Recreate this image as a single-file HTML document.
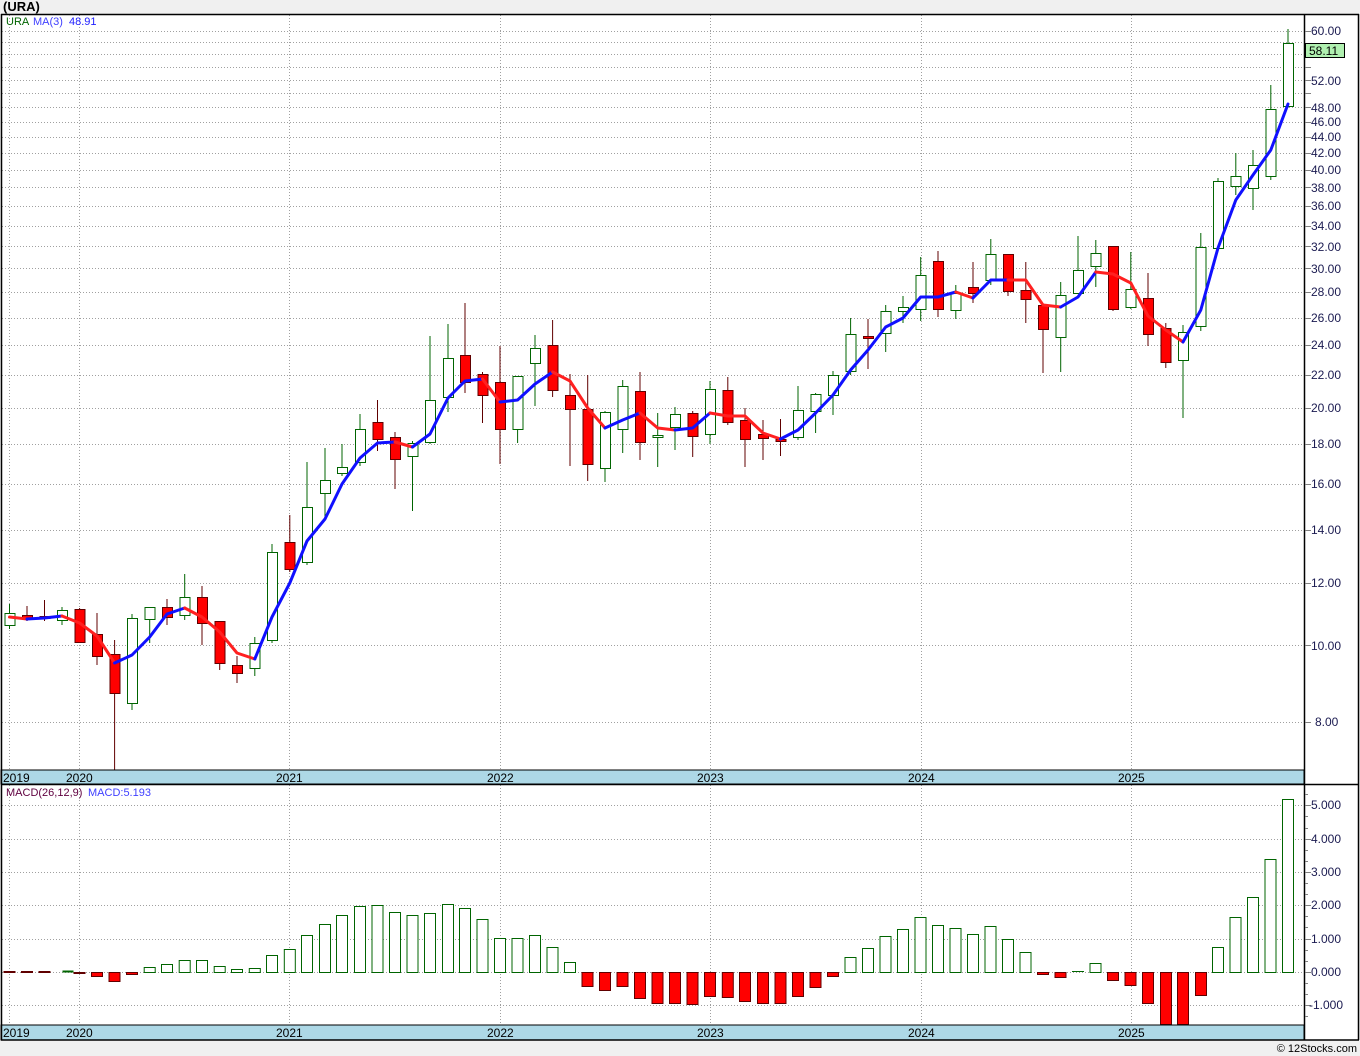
<!DOCTYPE html>
<html><head><meta charset="utf-8"><style>
html,body{margin:0;padding:0;background:#f0f0f0;}
svg{display:block;font-family:"Liberation Sans",sans-serif;}
</style></head><body>
<svg width="1360" height="1056" viewBox="0 0 1360 1056" xmlns="http://www.w3.org/2000/svg">
<rect width="1360" height="1056" fill="#f0f0f0"/>
<text x="3" y="11" font-size="13" font-weight="bold" fill="#000">(URA)</text>
<rect x="1" y="14" width="1358" height="1026" fill="#fff"/>
<g stroke="#a0a0a0" stroke-dasharray="1,2" stroke-width="1" fill="none">
<path d="M2 31.5H1304M2 42.5H1304M2 54.5H1304M2 67.5H1304M2 80.5H1304M2 93.5H1304M2 107.5H1304M2 122.5H1304M2 137.5H1304M2 153.5H1304M2 170.5H1304M2 187.5H1304M2 206.5H1304M2 226.5H1304M2 246.5H1304M2 268.5H1304M2 292.5H1304M2 318.5H1304M2 345.5H1304M2 375.5H1304M2 408.5H1304M2 444.5H1304M2 484.5H1304M2 530.5H1304M2 583.5H1304M2 645.5H1304M2 722.5H1304"/>
<path d="M9.5 15V770M79.5 15V770M289.5 15V770M500.5 15V770M710.5 15V770M921.5 15V770M1131.5 15V770"/>
<path d="M2 805.5H1304M2 839.5H1304M2 872.5H1304M2 905.5H1304M2 939.5H1304M2 972.5H1304M2 1005.5H1304"/>
<path d="M9.5 785V1025M79.5 785V1025M289.5 785V1025M500.5 785V1025M710.5 785V1025M921.5 785V1025M1131.5 785V1025"/>
</g>
<text x="6" y="25" font-size="11" fill="#006400">URA</text>
<text x="33" y="25" font-size="11" fill="#4040ff">MA(3)</text>
<text x="69" y="25" font-size="11" fill="#2020ff">48.91</text>
<g stroke-width="1">
<g stroke="#006400" fill="#fff">
<path d="M9.5 604V629M62 607V625M132 614V710M149.7 607V643M184.7 574V620M254.8 637V676M272 544V643M307 462V565M325 448V517M342 444V476M360 414V466M412.5 441V511M430 336V444M448 324V412M517.6 376V443M535 335V406M605 411V482M622.7 380V453M657.7 413V467M675 407V450M710 381V444M798 386V440M815.6 393V433M833 371V415M850.6 318V375M885.7 305V352M903 296V323M920.7 257V321M955.8 285V319M990.8 239V285M1060.7 282V372M1078 236V293M1095.8 240V287M1130.8 252V309M1183 325V418M1200.8 233V331M1218 178V250M1235.8 153V195M1253 150V210M1270.8 85V180M1288 29V108"/>
<rect x="5" y="613.5" width="10" height="12"/><rect x="57.5" y="610.5" width="10" height="10"/><rect x="127.5" y="618.5" width="10" height="85"/><rect x="145" y="607.5" width="10" height="12"/><rect x="180" y="597.5" width="10" height="18"/><rect x="250" y="643.5" width="10" height="25"/><rect x="267.5" y="552.5" width="10" height="88"/><rect x="302.5" y="507.5" width="10" height="55"/><rect x="320.5" y="480.5" width="10" height="13"/><rect x="337.5" y="467.5" width="10" height="6"/><rect x="355.5" y="429.5" width="10" height="33"/><rect x="408" y="443.5" width="10" height="13"/><rect x="425.5" y="400.5" width="10" height="42"/><rect x="443.5" y="358.5" width="10" height="39"/><rect x="513" y="376.5" width="10" height="53"/><rect x="530.5" y="348.5" width="10" height="15"/><rect x="600.5" y="412.5" width="10" height="56"/><rect x="618" y="386.5" width="10" height="43"/><rect x="653" y="435.5" width="10" height="2"/><rect x="670.5" y="414.5" width="10" height="13"/><rect x="705.5" y="389.5" width="10" height="45"/><rect x="793.5" y="410.5" width="10" height="27"/><rect x="811" y="394.5" width="10" height="17"/><rect x="828.5" y="375.5" width="10" height="20"/><rect x="846" y="334.5" width="10" height="37"/><rect x="881" y="311.5" width="10" height="22"/><rect x="898.5" y="307.5" width="10" height="4"/><rect x="916" y="275.5" width="10" height="34"/><rect x="951" y="293.5" width="10" height="17"/><rect x="986" y="254.5" width="10" height="26"/><rect x="1056" y="295.5" width="10" height="42"/><rect x="1073.5" y="270.5" width="10" height="23"/><rect x="1091" y="253.5" width="10" height="13"/><rect x="1126" y="289.5" width="10" height="18"/><rect x="1178.5" y="332.5" width="10" height="28"/><rect x="1196" y="247.5" width="10" height="79"/><rect x="1213.5" y="181.5" width="10" height="67"/><rect x="1231" y="176.5" width="10" height="10"/><rect x="1248.5" y="165.5" width="10" height="23"/><rect x="1266" y="109.5" width="10" height="67"/><rect x="1283.5" y="43.5" width="10" height="63"/>
</g>
<g stroke="#600000" fill="#ff0000">
<path d="M27 606V621M44.5 600V621M79.6 608V643M97 613V665M114.6 640V770M167 599V625M202 586V645M219.7 621V670M237 656V683M289.8 515V572M377.5 400V451M395 432V489M465 303V393M482.5 372V423M500 346V464M552.6 320V397M570 374V466M587.7 375V481M640 372V460M692.7 411V457M727.8 377V425M745 408V467M763 420V460M780.5 419V456M868 319V369M938 251V317M973 262V303M1008 254V296M1025.8 262V323M1043 305V373M1113 246V311M1148 273V346M1165.8 323V368"/>
<rect x="22.5" y="615.5" width="10" height="4"/><rect x="40" y="616.5" width="10" height="2"/><rect x="75" y="609.5" width="10" height="33"/><rect x="92.5" y="634.5" width="10" height="22"/><rect x="110" y="654.5" width="10" height="39"/><rect x="162.5" y="607.5" width="10" height="10"/><rect x="197.5" y="597.5" width="10" height="26"/><rect x="215" y="621.5" width="10" height="42"/><rect x="232.5" y="665.5" width="10" height="8"/><rect x="285" y="542.5" width="10" height="27"/><rect x="373" y="422.5" width="10" height="17"/><rect x="390.5" y="437.5" width="10" height="22"/><rect x="460.5" y="355.5" width="10" height="27"/><rect x="478" y="374.5" width="10" height="21"/><rect x="495.5" y="382.5" width="10" height="47"/><rect x="548" y="345.5" width="10" height="45"/><rect x="565.5" y="395.5" width="10" height="14"/><rect x="583" y="409.5" width="10" height="55"/><rect x="635.5" y="391.5" width="10" height="51"/><rect x="688" y="413.5" width="10" height="23"/><rect x="723" y="390.5" width="10" height="32"/><rect x="740.5" y="420.5" width="10" height="19"/><rect x="758.5" y="434.5" width="10" height="4"/><rect x="776" y="439.5" width="10" height="2"/><rect x="863.5" y="336.5" width="10" height="2"/><rect x="933.5" y="261.5" width="10" height="48"/><rect x="968.5" y="287.5" width="10" height="6"/><rect x="1003.5" y="254.5" width="10" height="37"/><rect x="1021" y="290.5" width="10" height="9"/><rect x="1038.5" y="305.5" width="10" height="24"/><rect x="1108.5" y="246.5" width="10" height="63"/><rect x="1143.5" y="298.5" width="10" height="36"/><rect x="1161" y="328.5" width="10" height="34"/>
</g>
</g>
<g fill="none" stroke-width="3" stroke-linejoin="round" stroke-linecap="round">
<polyline stroke="#ff2020" points="9.5,617 27,619"/>
<polyline stroke="#1010ff" points="27,619 44.5,618 62,616"/>
<polyline stroke="#ff2020" points="62,616 79.6,623 97,636 114.6,663"/>
<polyline stroke="#1010ff" points="114.6,663 132,655 149.7,637 167,614 184.7,608"/>
<polyline stroke="#ff2020" points="184.7,608 202,617 219.7,632 237,653 254.8,659"/>
<polyline stroke="#1010ff" points="254.8,659 272,617 289.8,583 307,541 325,519 342,484 360,458 377.5,443 395,442"/>
<polyline stroke="#ff2020" points="395,442 412.5,447"/>
<polyline stroke="#1010ff" points="412.5,447 430,434 448,398 465,381 482.5,379"/>
<polyline stroke="#ff2020" points="482.5,379 500,402"/>
<polyline stroke="#1010ff" points="500,402 517.6,400 535,384 552.6,372"/>
<polyline stroke="#ff2020" points="552.6,372 570,381 587.7,408 605,428"/>
<polyline stroke="#1010ff" points="605,428 622.7,420 640,413"/>
<polyline stroke="#ff2020" points="640,413 657.7,428 675,430"/>
<polyline stroke="#1010ff" points="675,430 692.7,428 710,413"/>
<polyline stroke="#ff2020" points="710,413 727.8,416 745,416 763,433 780.5,439"/>
<polyline stroke="#1010ff" points="780.5,439 798,430 815.6,413 833,395 850.6,370 868,350 885.7,327 903,318 920.7,297 938,297 955.8,292"/>
<polyline stroke="#ff2020" points="955.8,292 973,298"/>
<polyline stroke="#1010ff" points="973,298 990.8,280 1008,280"/>
<polyline stroke="#ff2020" points="1008,280 1025.8,280 1043,305 1060.7,307"/>
<polyline stroke="#1010ff" points="1060.7,307 1078,297 1095.8,272"/>
<polyline stroke="#ff2020" points="1095.8,272 1113,274 1130.8,283 1148,316 1165.8,330 1183,342"/>
<polyline stroke="#1010ff" points="1183,342 1200.8,310 1218,248 1235.8,200 1253,175 1270.8,150 1288,104"/>
</g>
<rect x="1" y="770" width="1303" height="14" fill="#add8e6" stroke="#000" stroke-width="1"/>
<g font-size="12" fill="#000">
<text x="3" y="782">2019</text><text x="66" y="782">2020</text><text x="276" y="782">2021</text><text x="487" y="782">2022</text><text x="697" y="782">2023</text><text x="908" y="782">2024</text><text x="1118" y="782">2025</text>
</g>
<text x="6" y="796" font-size="11" fill="#600040">MACD(26,12,9)</text>
<text x="88" y="796" font-size="11" fill="#4040ff">MACD:5.193</text>
<g stroke="#006400" fill="#fff">
<rect x="144.2" y="967.5" width="11" height="5"/><rect x="161.5" y="964.5" width="11" height="8"/><rect x="179.2" y="960.5" width="11" height="12"/><rect x="196.5" y="960.5" width="11" height="12"/><rect x="214.2" y="966.5" width="11" height="6"/><rect x="231.5" y="969.5" width="11" height="3"/><rect x="249.3" y="968.5" width="11" height="4"/><rect x="266.5" y="955.5" width="11" height="17"/><rect x="284.3" y="949.5" width="11" height="23"/><rect x="301.5" y="935.5" width="11" height="37"/><rect x="319.5" y="924.5" width="11" height="48"/><rect x="336.5" y="915.5" width="11" height="57"/><rect x="354.5" y="906.5" width="11" height="66"/><rect x="372" y="905.5" width="11" height="67"/><rect x="389.5" y="912.5" width="11" height="60"/><rect x="407" y="915.5" width="11" height="57"/><rect x="424.5" y="913.5" width="11" height="59"/><rect x="442.5" y="904.5" width="11" height="68"/><rect x="459.5" y="908.5" width="11" height="64"/><rect x="477" y="919.5" width="11" height="53"/><rect x="494.5" y="938.5" width="11" height="34"/><rect x="512" y="938.5" width="11" height="34"/><rect x="529.5" y="935.5" width="11" height="37"/><rect x="547" y="947.5" width="11" height="25"/><rect x="564.5" y="962.5" width="11" height="10"/><rect x="845" y="957.5" width="11" height="15"/><rect x="862.5" y="948.5" width="11" height="24"/><rect x="880" y="936.5" width="11" height="36"/><rect x="897.5" y="929.5" width="11" height="43"/><rect x="915" y="917.5" width="11" height="55"/><rect x="932.5" y="925.5" width="11" height="47"/><rect x="950" y="928.5" width="11" height="44"/><rect x="967.5" y="934.5" width="11" height="38"/><rect x="985" y="926.5" width="11" height="46"/><rect x="1002.5" y="939.5" width="11" height="33"/><rect x="1020" y="952.5" width="11" height="20"/><rect x="1090" y="963.5" width="11" height="9"/><rect x="1212.5" y="947.5" width="11" height="25"/><rect x="1230" y="917.5" width="11" height="55"/><rect x="1247.5" y="897.5" width="11" height="75"/><rect x="1265" y="859.5" width="11" height="113"/><rect x="1282.5" y="799.5" width="11" height="173"/>
<path d="M1072 971.5H1084"/>
</g>
<g stroke="#600000" fill="#ff0000">
<rect x="4" y="971.5" width="11" height="1" fill="#600000"/><rect x="21.5" y="971.5" width="11" height="1" fill="#600000"/><rect x="39" y="971.5" width="11" height="1" fill="#600000"/><rect x="74" y="972.5" width="11" height="1" fill="#600000"/><rect x="91.5" y="972.5" width="11" height="4"/><rect x="109" y="972.5" width="11" height="9"/><rect x="126.5" y="972.5" width="11" height="2"/><rect x="582" y="972.5" width="11" height="14"/><rect x="599.5" y="972.5" width="11" height="18"/><rect x="617" y="972.5" width="11" height="14"/><rect x="634.5" y="972.5" width="11" height="26"/><rect x="652" y="972.5" width="11" height="31"/><rect x="669.5" y="972.5" width="11" height="31"/><rect x="687" y="972.5" width="11" height="32"/><rect x="704.5" y="972.5" width="11" height="24"/><rect x="722.3" y="972.5" width="11" height="25"/><rect x="739.5" y="972.5" width="11" height="29"/><rect x="757.5" y="972.5" width="11" height="31"/><rect x="775" y="972.5" width="11" height="31"/><rect x="792.5" y="972.5" width="11" height="24"/><rect x="810" y="972.5" width="11" height="15"/><rect x="827.5" y="972.5" width="11" height="4"/><rect x="1037.5" y="972.5" width="11" height="2"/><rect x="1055" y="972.5" width="11" height="5"/><rect x="1107.5" y="972.5" width="11" height="8"/><rect x="1125" y="972.5" width="11" height="13"/><rect x="1142.5" y="972.5" width="11" height="31"/><rect x="1160.5" y="972.5" width="11" height="52"/><rect x="1177.5" y="972.5" width="11" height="52"/><rect x="1195.5" y="972.5" width="11" height="23"/>
</g>
<rect x="62.5" y="970.5" width="11" height="2" fill="#006400"/>
<rect x="1" y="1025" width="1303" height="15" fill="#add8e6" stroke="#000" stroke-width="1"/>
<g font-size="12" fill="#000">
<text x="3" y="1037">2019</text><text x="66" y="1037">2020</text><text x="276" y="1037">2021</text><text x="487" y="1037">2022</text><text x="697" y="1037">2023</text><text x="908" y="1037">2024</text><text x="1118" y="1037">2025</text>
</g>
<g stroke="#000" stroke-width="1.5" fill="none">
<path d="M1 14.5H1359M1.5 14V1040M1304.5 14V1040M1358.5 14V1040M1 784.5H1359M1 1040H1359"/>
</g>
<g stroke="#808080" stroke-width="1">
<path d="M1305 31.5h6M1305 67.5h6M1305 80.5h6M1305 93.5h6M1305 107.5h6M1305 122.5h6M1305 137.5h6M1305 153.5h6M1305 170.5h6M1305 187.5h6M1305 206.5h6M1305 226.5h6M1305 246.5h6M1305 268.5h6M1305 292.5h6M1305 318.5h6M1305 345.5h6M1305 375.5h6M1305 408.5h6M1305 444.5h6M1305 484.5h6M1305 530.5h6M1305 583.5h6M1305 645.5h6M1305 722.5h6"/>
<path d="M1305 805.5h6M1305 839.5h6M1305 872.5h6M1305 905.5h6M1305 939.5h6M1305 972.5h6M1305 1005.5h6M1305 794.5h3M1305 816.5h3M1305 828.5h3M1305 850.5h3M1305 861.5h3M1305 883.5h3M1305 894.5h3M1305 916.5h3M1305 927.5h3M1305 950.5h3M1305 961.5h3M1305 983.5h3M1305 994.5h3M1305 1016.5h3"/>
</g>
<g font-size="12" fill="#1a1a50">
<text x="1311" y="35">60.00</text><text x="1311" y="85">52.00</text><text x="1311" y="112">48.00</text><text x="1311" y="126">46.00</text><text x="1311" y="141">44.00</text><text x="1311" y="157">42.00</text><text x="1311" y="174">40.00</text><text x="1311" y="192">38.00</text><text x="1311" y="210">36.00</text><text x="1311" y="230">34.00</text><text x="1311" y="251">32.00</text><text x="1311" y="273">30.00</text><text x="1311" y="296">28.00</text><text x="1311" y="322">26.00</text><text x="1311" y="349">24.00</text><text x="1311" y="379">22.00</text><text x="1311" y="412">20.00</text><text x="1311" y="448">18.00</text><text x="1311" y="488">16.00</text><text x="1311" y="534">14.00</text><text x="1311" y="587">12.00</text><text x="1311" y="650">10.00</text><text x="1315" y="726">8.00</text>
<text x="1311" y="809">5.000</text><text x="1311" y="843">4.000</text><text x="1311" y="876">3.000</text><text x="1311" y="909">2.000</text><text x="1311" y="943">1.000</text><text x="1311" y="976">0.000</text><text x="1309" y="1009">-1.000</text>
</g>
<rect x="1305.5" y="43.5" width="39" height="14" fill="#b0f0b0" stroke="#000" stroke-width="1"/>
<text x="1309" y="55" font-size="12" fill="#000">58.11</text>
<text x="1357" y="1052" font-size="11" fill="#000" text-anchor="end">© 12Stocks.com</text>
</svg>
</body></html>
